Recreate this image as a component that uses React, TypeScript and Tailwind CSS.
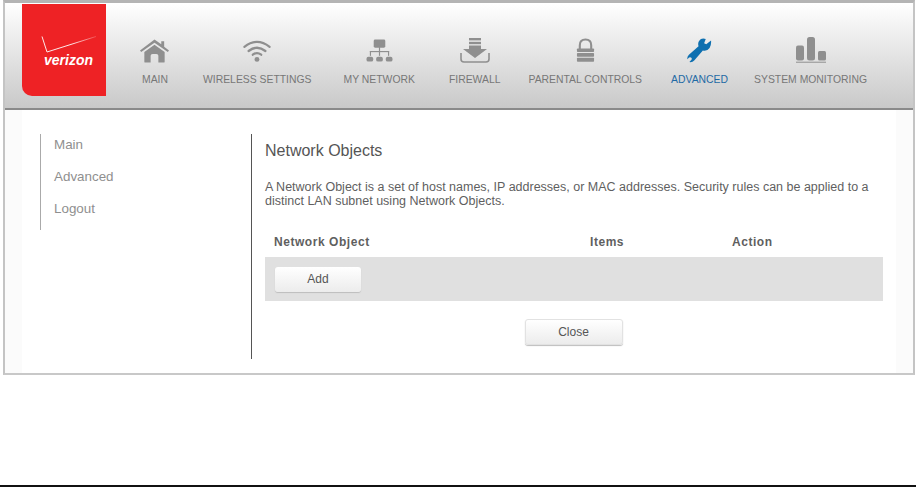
const font = { fontFamily: '"Liberation Sans", Arial, sans-serif' };

function HomeIcon() {
  return (
    <svg width="29" height="24" viewBox="0 0 30 24" fill="#8f8f8f" className="shrink-0">
      <path d="M15 0 L22 5 V2 H25 V7.5 L30 11.5 L28.8 13 L15 3.4 L1.2 13 L0 11.5 Z" />
      <path d="M15 5.5 L25.5 13 V23 Q25.5 24 24.5 24 H19 V17 Q19 15 17 15 H13 Q11 15 11 17 V24 H5.5 Q4.5 24 4.5 23 V13 Z" />
    </svg>
  );
}

function WifiIcon() {
  return (
    <svg width="28" height="24" viewBox="0 0 30 24" fill="none" stroke="#8f8f8f" strokeWidth="2.4" strokeLinecap="round" className="shrink-0">
      <path d="M1.5 7.5 Q15 -3 28.5 7.5" />
      <path d="M6 12 Q15 5 24 12" />
      <path d="M10.5 16 Q15 12.5 19.5 16" />
      <circle cx="15" cy="21" r="2.6" fill="#8f8f8f" stroke="none" />
    </svg>
  );
}

function NetworkIcon() {
  return (
    <svg width="27" height="24" viewBox="0 0 28 24" fill="#8f8f8f" className="shrink-0">
      <rect x="8" y="0" width="12" height="8.5" rx="1.5" />
      <rect x="13.4" y="8" width="1.2" height="9" />
      <rect x="4" y="12" width="20" height="1.2" />
      <rect x="4" y="12" width="1.2" height="5" />
      <rect x="22.8" y="12" width="1.2" height="5" />
      <rect x="0.5" y="18" width="7" height="5" rx="2" />
      <rect x="10.5" y="18" width="7" height="5" rx="2" />
      <rect x="20.5" y="18" width="7" height="5" rx="2" />
    </svg>
  );
}

function FirewallIcon() {
  return (
    <svg width="30" height="25" viewBox="0 0 30 25" fill="#8f8f8f" className="shrink-0">
      <rect x="9" y="0" width="12" height="2.4" />
      <rect x="9" y="3.8" width="12" height="2.4" />
      <path d="M9 7.6 H21 V11 H27 L15 20 L3 11 H9 Z" />
      <path d="M1 15 V21 Q1 24 4 24 H26 Q29 24 29 21 V15" fill="none" stroke="#8f8f8f" strokeWidth="1.6" />
    </svg>
  );
}

function LockIcon() {
  return (
    <svg width="19" height="25" viewBox="0 0 20 25" fill="#8f8f8f" className="shrink-0">
      <path d="M4 11 V7 Q4 1 10 1 Q16 1 16 7 V11" fill="none" stroke="#8f8f8f" strokeWidth="2.2" />
      <rect x="1" y="10.5" width="18" height="3.6" rx="0.8" />
      <rect x="1" y="15" width="18" height="4" rx="0.8" />
      <rect x="1" y="20" width="18" height="4.4" rx="0.8" />
    </svg>
  );
}

function WrenchIcon() {
  return (
    <svg width="25" height="25" viewBox="0 0 26 26" fill="#0f70b0" className="shrink-0">
      <path d="M25 2.5 L20 6.5 L17.8 5.5 L19.5 1 Q15 -0.5 12.5 3 Q11 5.5 12 8.5 L2 17.5 Q0 19.5 0.3 22 L2.2 20.3 Q3.5 19.5 4.5 20.5 Q5.5 21.8 4.4 23 L2.5 25 Q5.5 25.5 7.5 23.5 L16.5 13 Q21 14 23.5 10.5 Q25.5 7 25 2.5 Z" />
    </svg>
  );
}

function ChartIcon() {
  return (
    <svg width="30" height="26" viewBox="0 0 30 26" fill="#8f8f8f" className="shrink-0">
      <rect x="0" y="8.5" width="8" height="15" rx="2" />
      <rect x="11" y="0" width="8" height="23.5" rx="2.5" />
      <rect x="22" y="14" width="8" height="9.5" rx="1.5" />
      <rect x="0" y="24.7" width="30" height="1" />
    </svg>
  );
}

function VerizonLogo() {
  return (
    <div className="flex h-[92px] w-[84px] shrink-0 flex-col items-center rounded-bl-[10px] bg-[#ee2225] pt-[32px] pl-[9px]">
      <svg width="58" height="18" viewBox="0 0 58 18" fill="none">
        <defs>
          <linearGradient id="tick" x1="0" x2="1" y1="0" y2="0">
            <stop offset="0.55" stopColor="#fff" />
            <stop offset="1" stopColor="#fff" stopOpacity="0.2" />
          </linearGradient>
        </defs>
        <path d="M2 0.5 L7 16 L56 0.5" stroke="url(#tick)" strokeWidth="0.9" />
      </svg>
      <span className="mt-[-1px] text-[14px] leading-[14px] font-bold italic text-white">verizon</span>
      <svg width="50" height="3" viewBox="0 0 50 3" fill="none">
        <defs>
          <linearGradient id="swoosh" x1="0" x2="1" y1="0" y2="0">
            <stop offset="0" stopColor="#fff" />
            <stop offset="1" stopColor="#fff" stopOpacity="0" />
          </linearGradient>
        </defs>
        <path d="M26 1 H50" stroke="url(#swoosh)" strokeWidth="1.2" />
      </svg>
    </div>
  );
}

const navItems = [
  { label: 'MAIN', icon: <HomeIcon />, className: 'ml-[36px] text-[#777777]' },
  { label: 'WIRELESS SETTINGS', icon: <WifiIcon />, className: 'ml-[35px] text-[#777777]' },
  { label: 'MY NETWORK', icon: <NetworkIcon />, className: 'ml-[32px] text-[#777777]' },
  { label: 'FIREWALL', icon: <FirewallIcon />, className: 'ml-[34px] text-[#777777]' },
  { label: 'PARENTAL CONTROLS', icon: <LockIcon />, className: 'ml-[28px] text-[#777777]' },
  { label: 'ADVANCED', icon: <WrenchIcon />, className: 'ml-[29px] text-[#1f6aa5]' },
  { label: 'SYSTEM MONITORING', icon: <ChartIcon />, className: 'ml-[26px] text-[#777777]' },
];

export default function App() {
  return (
    <div style={font} className="h-[487px] w-[916px] bg-white">
      <div className="ml-[3px] h-[375px] w-[912px] border-x-2 border-t-[3px] border-b-2 border-x-[#c4c4c4] border-t-[#b4b4b4] border-b-[#c8c8c8] bg-[#fbfbfb]">
        <div className="flex h-[107px] border-b-2 border-[#8a8a8a] bg-gradient-to-b from-white to-[#c9c9c9] pl-[17px]">
          <div className="pt-[1px]">
            <VerizonLogo />
          </div>
          <nav className="flex">
            {navItems.map((item) => (
              <div key={item.label} className={`flex flex-col items-center ${item.className}`}>
                <div className="mt-[33px] flex h-[27px] w-0 items-end justify-center">{item.icon}</div>
                <span className="mt-[10px] text-[10.4px] leading-[14px] whitespace-nowrap">{item.label}</span>
              </div>
            ))}
          </nav>
        </div>

        <div className="mx-[17px] flex h-[263px] bg-white pt-[24px]">
          <aside className="ml-[18px] flex h-[96px] w-[211px] flex-col gap-[14px] border-l border-[#aaaaaa] pt-[2px] pl-[13px] text-[13.4px] leading-[18px] text-[#8f8f8f]">
            <span>Main</span>
            <span>Advanced</span>
            <span>Logout</span>
          </aside>

          <main className="h-[225px] w-[633px] border-l border-[#555555] pl-[13px] text-[#5f5f5f]">
            <h1 className="mt-[8px] text-[16px] leading-[18px] font-normal text-[#555555]">Network Objects</h1>
            <p className="mt-[20px] text-[12.5px] leading-[14px]">
              A Network Object is a set of host names, IP addresses, or MAC addresses. Security rules can be applied to a<br />
              distinct LAN subnet using Network Objects.
            </p>
            <div className="mt-[25px] flex h-[17px] items-center pl-[9px] text-[12px] font-bold tracking-[0.55px] text-[#5f5f5f]">
              <span className="w-[316px]">Network Object</span>
              <span className="w-[142px]">Items</span>
              <span>Action</span>
            </div>
            <div className="mt-[7px] flex h-[44px] w-[618px] items-center bg-[#e0e0e0] pl-[10px]">
              <button className="h-[25px] w-[86px] rounded-[3px] bg-gradient-to-b from-white to-[#ececec] text-[12px] text-[#555555] shadow-[0_1px_1px_#bdbdbd]">Add</button>
            </div>
            <div className="mt-[18px] flex w-[618px] justify-center">
              <button className="ml-[-1px] h-[26px] w-[98px] rounded-[3px] border border-[#e2e2e2] bg-gradient-to-b from-white to-[#ececec] text-[12px] text-[#555555] shadow-[0_1px_1px_#bdbdbd]">Close</button>
            </div>
          </main>
        </div>
      </div>
      <div className="mt-[110px] h-[2px] w-full bg-[#111111]"></div>
    </div>
  );
}
